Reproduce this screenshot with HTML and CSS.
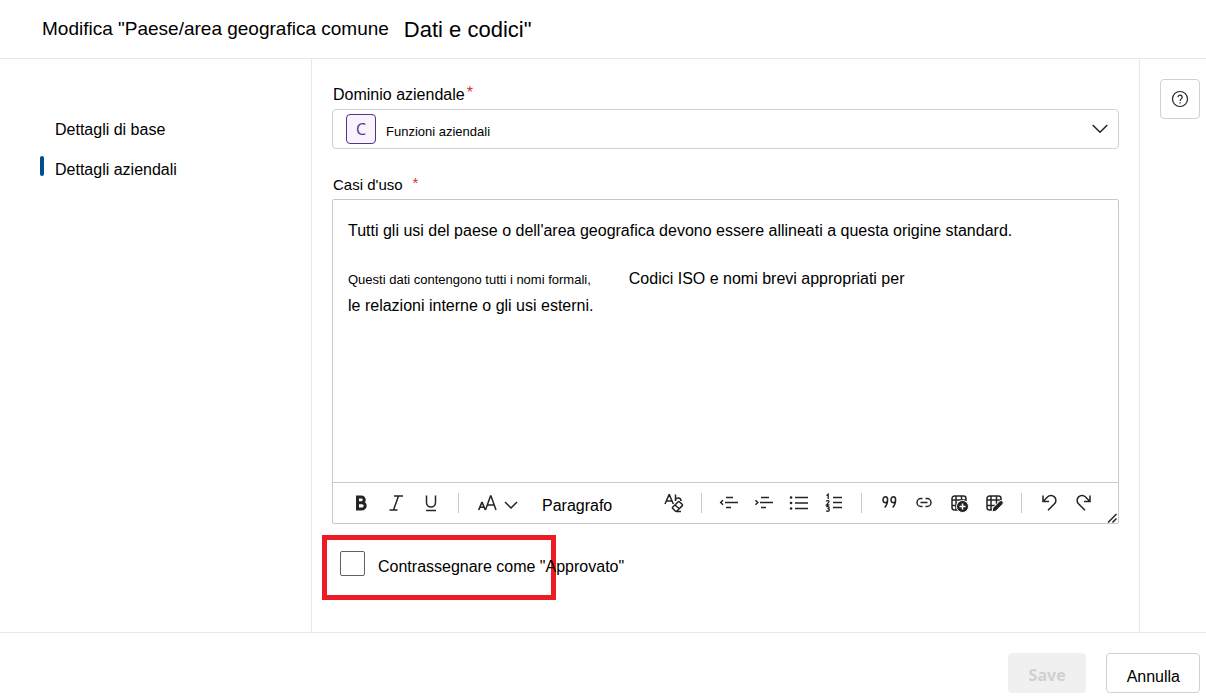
FILE: index.html
```html
<!DOCTYPE html>
<html lang="it">
<head>
<meta charset="utf-8">
<title>Modifica dati</title>
<meta name="viewport" content="width=device-width, initial-scale=1">
<link rel="stylesheet" href="styles.css">
</head>
<body>
<header class="header">
  <h1 class="title"><span>Modifica "Paese/area geografica comune</span> <span class="title-end">Dati e codici"</span></h1>
</header>
<div class="columns">
  <nav class="steps">
    <a class="step" href="#base">Dettagli di base</a>
    <a class="step step-current" href="#aziendali" aria-current="step">Dettagli aziendali</a>
  </nav>
  <main class="form">
    <label class="label" for="domain">Dominio aziendale<span class="required">*</span></label>
    <div class="picker">
      <span class="badge" aria-hidden="true">C</span>
      <select class="picker-select" id="domain"><option>Funzioni aziendali</option></select>
      <svg class="picker-arrow" width="16" height="10" viewBox="0 0 16 10"><path d="M.7 1 8 8.3 15.3 1"/></svg>
    </div>
    <div class="label label-small" id="uses-label">Casi d'uso<span class="required required-apart">*</span></div>
    <div class="editor">
      <div class="editor-text" contenteditable="true" role="textbox" aria-multiline="true" aria-labelledby="uses-label" spellcheck="false">
        <p class="para">Tutti gli usi del paese o dell'area geografica devono essere allineati a questa origine standard.</p>
        <p class="para"><span class="fine">Questi dati contengono tutti i nomi formali,</span><span class="apart">Codici ISO e nomi brevi appropriati per</span><br>le relazioni interne o gli usi esterni.</p>
      </div>
      <div class="toolbar" role="toolbar" aria-label="Formattazione">
        <button class="tool" aria-label="Grassetto"><svg class="icon" viewBox="0 0 20 20"><path stroke-width="3" d="M6.500 4h3.900a2.800 2.800 0 0 1 0 5.700H6.500zM6.500 9.700h4.600a3.100 3.100 0 0 1 0 6.200H6.500z"/></svg></button>
        <button class="tool" aria-label="Corsivo"><svg class="icon" viewBox="0 0 20 20"><path d="M8 3h9M3.500 17h8M12.500 3 7.500 17"/></svg></button>
        <button class="tool" aria-label="Sottolineato"><svg class="icon" viewBox="0 0 20 20"><path d="M5.500 2.500v7a4.500 4.500 0 0 0 9 0v-7M5 17.500h10"/></svg></button>
        <span class="divider"></span>
        <button class="tool tool-size" aria-label="Dimensione carattere"><svg class="icon" viewBox="0 0 20 20"><path d="m8.500 17 5-14h.500l5 14M10.300 12h7"/><path stroke-width="1.600" d="m1.700 17 3.100-7.500h.400L8.300 17M2.800 14.300h4.500"/></svg><svg class="icon-chevron" viewBox="0 0 14 8"><path d="m1 1 6 6 6-6"/></svg></button>
        <select class="style-select" aria-label="Stile"><option>Paragrafo</option></select>
        <button class="tool" aria-label="Cancella formattazione"><svg class="icon" viewBox="0 0 20 20"><path d="M1 11 5 1.700h.400L9.300 11M2.300 8h5.800M11.500 1.500V8M11.500 6.500c1.500-2.500 5.500-1.800 5.500 1.500M8.800 14l5.200-5q.8-.7 1.600 0l2.500 2.300q.7.800 0 1.600l-5 4.900q-1 .8-2 0l-2.300-2.300q-.7-.800 0-1.500zM11 12l4.300 3.700M12 18.500h5"/></svg></button>
        <span class="divider"></span>
        <button class="tool" aria-label="Riduci rientro"><svg class="icon" viewBox="0 0 20 20"><path d="M7 4.500h7M6 9.500h13M7 14.500h5M4 7.200 1.700 9.500 4 11.800"/></svg></button>
        <button class="tool" aria-label="Aumenta rientro"><svg class="icon" viewBox="0 0 20 20"><path d="M7 4.500h8M6 9.500h13M7 14.500h5M1.500 7.200 3.800 9.500 1.500 11.800"/></svg></button>
        <button class="tool" aria-label="Elenco puntato"><svg class="icon" viewBox="0 0 20 20"><path d="M6 4.500h13M6 10h13M6 15.500h13"/><path stroke-width="2.600" stroke-linecap="round" d="M2 4.500h.1M2 10h.1M2 15.500h.1"/></svg></button>
        <button class="tool" aria-label="Elenco numerato"><svg class="icon" viewBox="0 0 20 20"><path d="M9 4.500h9M9 9.500h9M9 14.500h9"/><path stroke-width="1.300" d="m2.500 2.500 1.700-1.200V6M2.300 8.500c.4-1.400 3.200-1.200 2.700.3L2.400 12h3M2.400 14c1-.9 2.900-.5 2.700.7-.1 1-1.600 1-1.600 1s2-.1 1.900 1.300c-.1 1.500-2.300 1.600-3.200.6"/></svg></button>
        <span class="divider"></span>
        <button class="tool" aria-label="Citazione"><svg class="icon" viewBox="0 0 20 20"><path d="M8.600 7a2.300 2.900 0 1 1-4.600-.5 2.300 2.900 0 0 1 4.600.5c0 3-.9 5.500-2.900 7.500M16.600 7a2.300 2.900 0 1 1-4.600-.5 2.300 2.900 0 0 1 4.600.5c0 3-.9 5.500-2.900 7.500"/></svg></button>
        <button class="tool" aria-label="Collegamento"><svg class="icon" viewBox="0 0 20 20"><path d="M8.500 5.500H7a4 4 0 0 0 0 8h1.500M11.500 5.500H13a4 4 0 0 1 0 8h-1.500M6.500 9.500h7"/></svg></button>
        <button class="tool" aria-label="Inserisci tabella"><svg class="icon" viewBox="0 0 20 20"><path d="M9 17H5.500A2.500 2.500 0 0 1 3 14.500v-9A2.500 2.500 0 0 1 5.500 3h9A2.500 2.500 0 0 1 17 5.500V8M3 7h14M3 12.500h6M7 3v14M12.500 3v6"/><circle class="solid" cx="13.500" cy="13.500" r="6"/><path class="reverse" d="M13.500 10.500v6M10.500 13.500h6"/></svg></button>
        <button class="tool" aria-label="Modifica tabella"><svg class="icon" viewBox="0 0 20 20"><path d="M8 17H5.500A2.500 2.500 0 0 1 3 14.500v-9A2.500 2.500 0 0 1 5.500 3h9A2.500 2.500 0 0 1 17 5.500V7M3 7h14M3 12.500h8M7 3v14M12.500 3v8"/><path class="solid" d="m8 19 .8-4.200 6.800-6.700q1.600-1.300 3 .1t.1 3l-6.700 6.900z"/></svg></button>
        <span class="divider"></span>
        <button class="tool" aria-label="Annulla modifica"><svg class="icon" viewBox="0 0 20 20"><path d="M4 2.500v6h6M4.300 8.200 8.500 4a4.800 4.800 0 0 1 7 6.800L9 17.300"/></svg></button>
        <button class="tool" aria-label="Ripeti"><svg class="icon" viewBox="0 0 20 20"><path d="M16 2.500v6h-6M15.700 8.200 11.500 4a4.800 4.800 0 0 0-7 6.800l6.500 6.500"/></svg></button>
      </div>
      <svg class="grip" viewBox="0 0 10 10"><path d="M1 9.500 9.500 1M5.500 9.500l4-4"/></svg>
    </div>
    <div class="approve">
      <span class="highlight"></span>
      <input class="check" type="checkbox" id="approved">
      <label class="check-label" for="approved">Contrassegnare come "Approvato"</label>
    </div>
  </main>
  <aside class="side">
    <button class="help" aria-label="Guida"><svg class="icon" viewBox="0 0 20 20"><circle cx="10" cy="10" r="7.500"/><path d="M8 8.200c0-2.800 4.200-2.700 4.200 0 0 1.700-2.100 1.800-2.100 3.800M10.100 13.200v1.400"/></svg></button>
  </aside>
</div>
<footer class="footer">
  <button class="button button-save" disabled>Save</button>
  <button class="button">Annulla</button>
</footer>
</body>
</html>
```

FILE: styles.css
```css
* {
  box-sizing: border-box;
}

body {
  margin: 0;
  min-height: 100vh;
  display: flex;
  flex-direction: column;
  background: #fff;
  color: #000;
  font: 16px/20px "Liberation Sans", Arial, sans-serif;
}

button,
select {
  font: inherit;
  color: inherit;
  background: none;
  border: 0;
  padding: 0;
  margin: 0;
}

svg {
  display: block;
  fill: none;
  stroke: #242424;
}

.header {
  padding: 16px 42px;
  border-bottom: 1px solid #e8e8e8;
}

.title {
  display: flex;
  align-items: center;
  gap: 15px;
  margin: 0;
  font-size: 19px;
  line-height: 24px;
  font-weight: 400;
}

.title-end {
  padding-top: 2px;
  font-size: 22px;
}

.columns {
  flex: 1;
  display: grid;
  grid-template-columns: 312px 1fr 67px;
}

.steps {
  display: flex;
  flex-direction: column;
  gap: 20px;
  padding: 61px 40px 0;
  border-right: 1px solid #e8e8e8;
}

.step {
  display: flex;
  padding-left: 15px;
  color: inherit;
  text-decoration: none;
}

.step-current {
  position: relative;
}

.step-current::before {
  content: "";
  position: absolute;
  left: 0;
  top: -4px;
  width: 4px;
  height: 20px;
  border-radius: 2px;
  background: #004e8c;
}

.form {
  padding: 26px 20px 30px;
}

.label {
  display: block;
  padding-left: 1px;
  margin-bottom: 4px;
}

.label-small {
  margin-top: 26px;
  font-size: 15px;
}

.required {
  margin-left: 2px;
  color: #d13438;
  vertical-align: 2px;
  line-height: 1;
}

.required-apart {
  margin-left: 10px;
}

.picker {
  position: relative;
}

.picker-select {
  display: block;
  width: 100%;
  height: 40px;
  padding: 5px 40px 0 53px;
  border: 1px solid #d1d1d1;
  border-radius: 4px;
  font-size: 13px;
  appearance: none;
}

.badge {
  position: absolute;
  left: 14px;
  top: 5px;
  width: 30px;
  height: 30px;
  border: 1px solid #5c2e91;
  border-radius: 4px;
  background: #f7f4fb;
  color: #5c2e91;
  font: 16px/28px "Open Sans", sans-serif;
  text-align: center;
}

.picker-arrow {
  position: absolute;
  right: 11px;
  top: 15px;
  stroke-width: 1.500;
}

.editor {
  position: relative;
  border: 1px solid #c8c8c8;
  border-radius: 2px;
}

.editor-text {
  min-height: 282px;
  padding: 17px 15px;
  line-height: 27px;
  outline: 0;
}

.para {
  margin: 0 0 21px;
}

.fine {
  font-size: 13px;
  line-height: 1;
}

.apart {
  margin-left: 38px;
}

.toolbar {
  display: flex;
  align-items: center;
  height: 41px;
  padding-left: 10px;
  border-top: 1px solid #c8c8c8;
}

.tool {
  width: 35px;
  height: 40px;
  display: flex;
  flex: none;
  align-items: center;
  justify-content: center;
}

.tool-size {
  width: 58px;
  gap: 7px;
}

.icon {
  width: 20px;
  height: 20px;
  stroke-width: 1.500;
}

.icon-chevron {
  width: 14px;
  height: 8px;
  margin-top: 4px;
  stroke-width: 1.500;
}

.solid {
  fill: #242424;
  stroke: #fff;
  stroke-width: 1;
}

.reverse {
  stroke: #fff;
}

.divider {
  flex: none;
  width: 1px;
  height: 20px;
  margin: 0 9px 0 10px;
  background: #c8c8c8;
}

.style-select {
  width: 130px;
  height: 40px;
  padding: 5px 0 0 16px;
  appearance: none;
}

.grip {
  position: absolute;
  right: 1px;
  bottom: 0;
  width: 10px;
  height: 10px;
  stroke-width: 1.500;
}

.approve {
  position: relative;
  display: flex;
  align-items: flex-start;
  gap: 13px;
  margin-top: 27px;
  padding-left: 8px;
}

.highlight {
  position: absolute;
  left: -10px;
  top: -16px;
  width: 234px;
  height: 65px;
  border: 5px solid #ed1c24;
  pointer-events: none;
}

.check {
  appearance: none;
  width: 25px;
  height: 25px;
  margin: 0;
  border: 1px solid #616161;
  border-radius: 2px;
}

.check-label {
  position: relative;
  padding-top: 6px;
}

.side {
  padding: 20px 6px 0 20px;
  border-left: 1px solid #e8e8e8;
}

.help {
  width: 40px;
  height: 40px;
  display: grid;
  place-items: center;
  border: 1px solid #d1d1d1;
  border-radius: 4px;
}

.help .icon {
  stroke-width: 1.200;
}

.footer {
  display: flex;
  justify-content: flex-end;
  gap: 20px;
  padding: 20px 6px 5px;
  border-top: 1px solid #e8e8e8;
}

.button {
  height: 40px;
  padding: 7px 19px 0 20px;
  border: 1px solid #d1d1d1;
  border-radius: 4px;
}

.button-save {
  padding-top: 3px;
  border-color: #f0f0f0;
  background: #f0f0f0;
  color: #d0d0d0;
  font-family: "Open Sans", sans-serif;
  font-weight: 700;
}
```
